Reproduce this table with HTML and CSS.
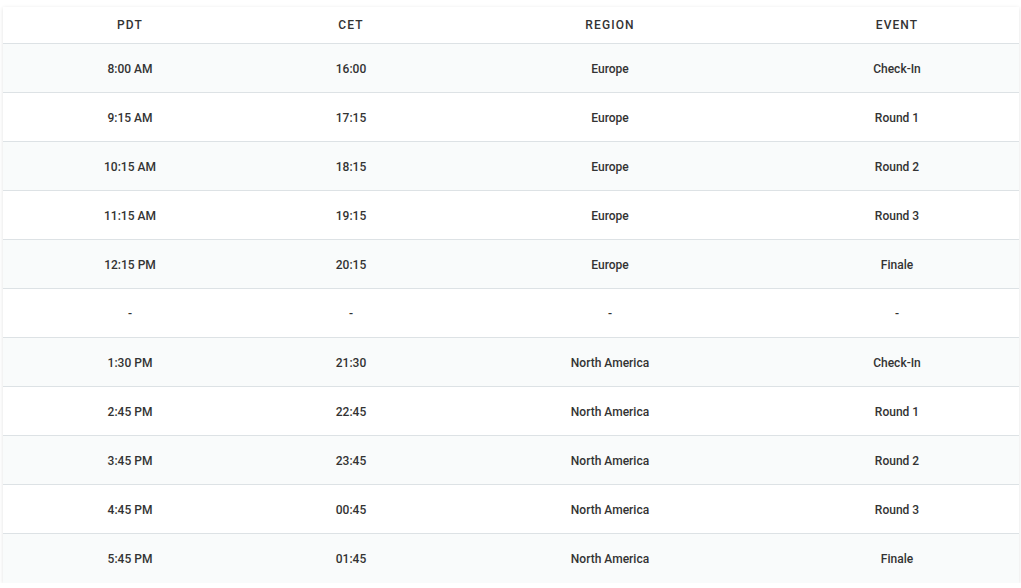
FILE: index.html
```html
<!DOCTYPE html>
<html>
<head>
<meta charset="utf-8">
<link rel="stylesheet" href="styles.css">
</head>
<body>
<div class="wrap">
  <table class="sched">
    <colgroup>
      <col class="c1"><col class="c2"><col class="c3"><col class="c4">
    </colgroup>
    <thead>
      <tr><th>PDT</th><th>CET</th><th>REGION</th><th>EVENT</th></tr>
    </thead>
    <tbody>
      <tr><td>8:00 AM</td><td>16:00</td><td>Europe</td><td>Check-In</td></tr>
      <tr><td>9:15 AM</td><td>17:15</td><td>Europe</td><td>Round 1</td></tr>
      <tr><td>10:15 AM</td><td>18:15</td><td>Europe</td><td>Round 2</td></tr>
      <tr><td>11:15 AM</td><td>19:15</td><td>Europe</td><td>Round 3</td></tr>
      <tr><td>12:15 PM</td><td>20:15</td><td>Europe</td><td>Finale</td></tr>
      <tr><td>-</td><td>-</td><td>-</td><td>-</td></tr>
      <tr><td>1:30 PM</td><td>21:30</td><td>North America</td><td>Check-In</td></tr>
      <tr><td>2:45 PM</td><td>22:45</td><td>North America</td><td>Round 1</td></tr>
      <tr><td>3:45 PM</td><td>23:45</td><td>North America</td><td>Round 2</td></tr>
      <tr><td>4:45 PM</td><td>00:45</td><td>North America</td><td>Round 3</td></tr>
      <tr><td>5:45 PM</td><td>01:45</td><td>North America</td><td>Finale</td></tr>
    </tbody>
  </table>
</div>
</body>
</html>
```
FILE: styles.css
```css
html, body {
  margin: 0;
  padding: 0;
  background: #ffffff;
}
body {
  font-family: Roboto, "Liberation Sans", sans-serif;
  color: #333333;
}
.wrap {
  padding: 7px 3px 0 3px;
}
.sched {
  width: 1015px;
  border-collapse: collapse;
  table-layout: fixed;
  background: #ffffff;
  box-shadow: 0 1px 4px rgba(0, 0, 0, 0.12);
}
.c1 { width: 254px; }
.c2 { width: 188px; }
.c3 { width: 330px; }
.c4 { width: 244px; }
.sched th {
  height: 36px;
  padding: 0;
  font-size: 12px;
  font-weight: 500;
  letter-spacing: 1.1px;
  text-align: center;
  color: #333333;
  border-bottom: 1px solid #dde2e5;
}
.sched td {
  height: 49px;
  padding: 2px 0 0 0;
  box-sizing: border-box;
  font-size: 12px;
  font-weight: 500;
  text-align: center;
  color: #333333;
  border-bottom: 1px solid #dde2e5;
}
.sched tbody tr:nth-child(odd) {
  background: #f9fbfb;
}
.sched tbody tr:last-child td {
  border-bottom: none;
}
```
